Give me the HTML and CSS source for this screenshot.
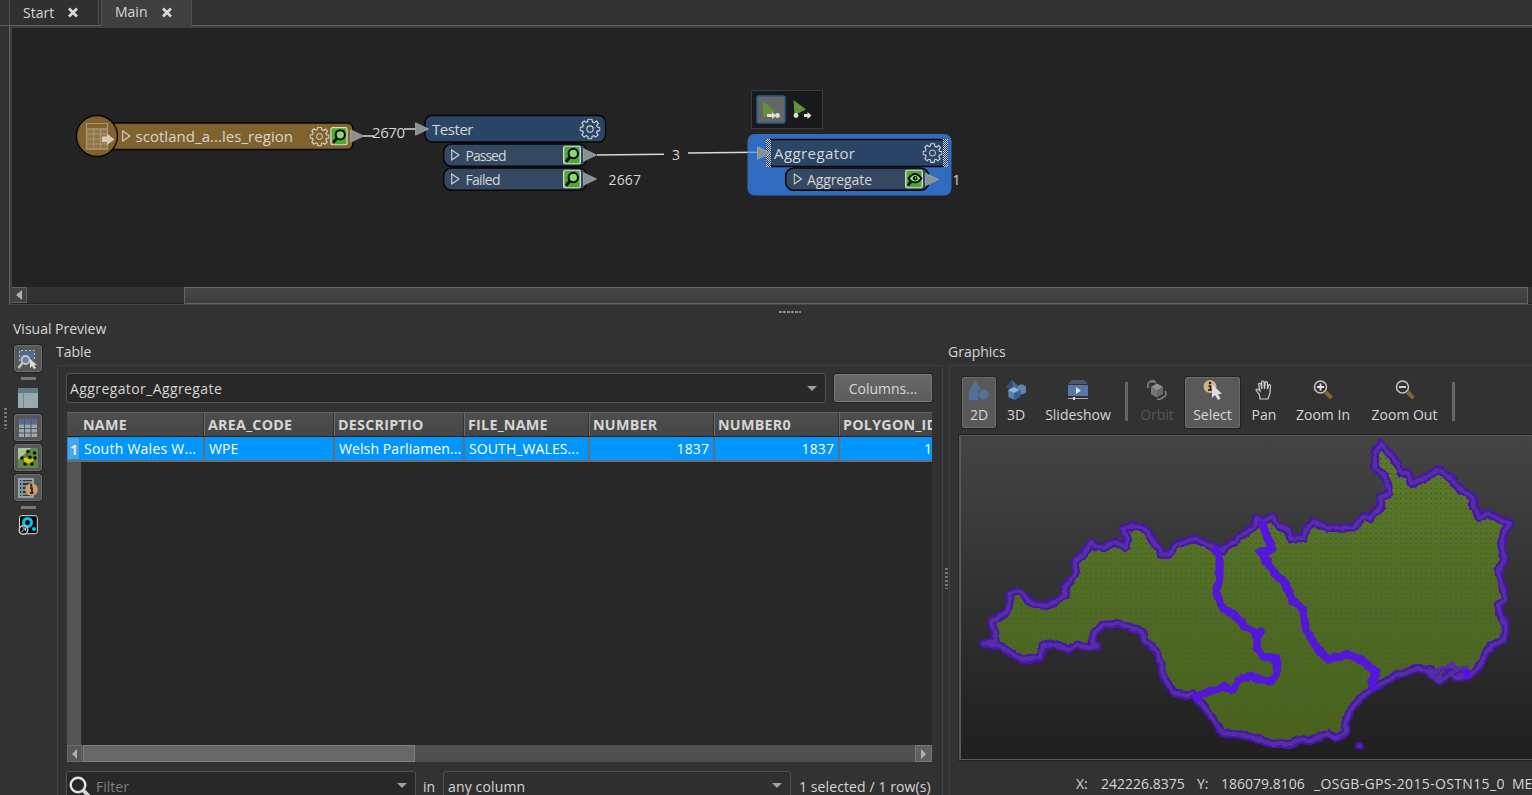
FILE: index.html
```html
<!DOCTYPE html>
<html lang="en">
<head>
<meta charset="utf-8">
<title>Workbench</title>
<link rel="stylesheet" href="styles.css">
</head>
<body>
<svg class="defs" width="0" height="0">
  <defs>
    <symbol id="gear" viewBox="-10 -10 20 20"><path d="M-1.8-9.3H1.8L2.4-6.7 4-6 6.2-7.5 8-5.2 6.4-3.2 6.9-1.8 9.4-1.2V1.5L6.9 2 6.3 3.4 7.7 5.6 5.4 7.7 3.5 6.3 2 7 1.5 9.4H-1.6L-2.1 7-3.6 6.3-5.6 7.7-7.7 5.5-6.3 3.5-6.9 2-9.4 1.5V-1.5L-6.9-2-6.3-3.5-7.7-5.6-5.5-7.7-3.6-6.4-2.3-6.9Z" fill="none" stroke="#d5d5d5" stroke-width="1.1"/><circle r="3" fill="none" stroke="#d5d5d5"/></symbol>
    <symbol id="lens" viewBox="0 0 18 19"><rect x=".7" y=".7" width="16.6" height="17.6" rx="1.8" fill="#4bab2b" stroke="#d8dcd6" stroke-width="1.3"/><circle cx="10.3" cy="8" r="4.7" fill="#8cd673" stroke="#050805" stroke-width="2"/><path d="M7 11.5 3 16" stroke="#050805" stroke-width="2.8"/></symbol>
    <symbol id="eye" viewBox="0 0 18 19"><rect x=".7" y=".7" width="16.6" height="17.6" rx="1.8" fill="#4bab2b" stroke="#d8dcd6" stroke-width="1.3"/><path d="M3.5 9Q10 0 16.5 9 10 17 3.500 9Z" fill="#98df80" stroke="#050805" stroke-width="1.800"/><circle cx="10.2" cy="8.8" r="2.3" fill="#050805"/><circle cx="10.6" cy="8.300" r=".9" fill="#98df80"/><path d="M6 12 3 16" stroke="#050805" stroke-width="2.8"/></symbol>
    <symbol id="expand" viewBox="0 0 9 12"><path d="M.7 1V11L8 6Z" fill="none" stroke="#d5d5d5" stroke-width="1.1"/></symbol>
    <symbol id="port" viewBox="0 0 14 14"><path d="M.5.8V13.2L13.5 7Z" fill="#8b9193" stroke="#a5a9aa" stroke-width=".8"/></symbol>
    <pattern id="stipple" width="2" height="2" patternUnits="userSpaceOnUse"><path d="M0 0H1V1H0ZM1 1H2V2H1Z" fill="#c3c9d2"/></pattern>
  </defs>
</svg>
<div class="app">
  <div class="tabs">
    <div class="tab start"><span>Start</span><svg width="10" height="11" viewBox="0 0 10 11"><path d="M1 1.500 9 9.500M9 1.500 1 9.500"/></svg></div>
    <div class="tab main"><span>Main</span><svg width="10" height="11" viewBox="0 0 10 11"><path d="M1 1.500 9 9.500M9 1.500 1 9.500"/></svg></div>
  </div>
  <div class="workspace">
    <svg class="canvas" width="1520" height="259" viewBox="12 28 1520 259">
      <!-- reader -->
      <path d="M110 123H347Q353 123 353 130V142Q353 149.500 347 149.500H110Z" fill="#80622d" stroke="#050505" stroke-width="1.300"/>
      <circle cx="97" cy="136" r="20.500" fill="#80622d" stroke="#050505" stroke-width="1.300"/>
      <g fill="none" stroke="#a99573" stroke-width="1.200"><path fill="#927649" d="M86.500 129H107.500V149H86.500Z"/><path d="M86.500 123.500H107.500V149H86.500ZM86.500 129H107.500M86.500 134H107.500M86.500 139H107.500M86.500 144H107.500M93.500 129V149M100.500 129V149"/></g>
      <path d="M102 136.500H107V133.500L114.500 139.500 107 145V142H102Z" fill="#d5c9b5"/>
      <use href="#expand" x="122" y="130" width="9" height="12"/>
      <text x="135.500" y="142" textLength="157.500">scotland_a...les_region</text>
      <use href="#gear" x="309.500" y="126.500" width="20" height="20"/>
      <use href="#lens" x="330" y="127" width="18" height="18.500"/>
      <path class="link" d="M360 136H374M404 129H416M597 155 664 154.300M688 153 757 152.300"/>
      <use href="#port" x="350" y="129" width="14" height="14"/>
      <text x="372" y="138" textLength="33">2670</text>
      <!-- tester -->
      <rect x="425" y="115.500" width="180.500" height="26.500" rx="7" fill="#2b4567" stroke="#050505" stroke-width="1.300"/>
      <rect class="sub" x="443.700" y="144" width="143" height="22.300" rx="8"/>
      <rect class="sub" x="443.700" y="168" width="143" height="22.300" rx="8"/>
      <use href="#port" x="415" y="122" width="14" height="14"/>
      <text x="432" y="135" textLength="41.500">Tester</text>
      <use href="#gear" x="579.500" y="118.500" width="21" height="21"/>
      <use href="#expand" x="451" y="149" width="9" height="12"/><use href="#expand" x="451" y="173" width="9" height="12"/>
      <text class="small" x="465.500" y="161" textLength="41">Passed</text><text class="small" x="465.500" y="185" textLength="35">Failed</text>
      <use href="#port" x="583" y="148" width="14" height="14"/><use href="#port" x="583" y="172" width="14" height="14"/>
      <use href="#lens" x="563" y="145.500" width="18" height="19"/><use href="#lens" x="563" y="169.500" width="18" height="19"/>
      <text class="small" x="672" y="160">3</text><text class="small" x="608.500" y="185" textLength="32.500">2667</text>
      <!-- run toolbar -->
      <rect x="751.500" y="90.500" width="71" height="38" fill="#191919" stroke="#3b3b3b"/>
      <rect x="757" y="96" width="28" height="27" rx="2" fill="#666" stroke="#21618f" stroke-width="1.500"/>
      <path d="M763 101 775 111.500 763 117.500ZM793.500 100 806 109.500 794.500 115Z" fill="#61923e"/>
      <g fill="#dedede"><path d="M767 114H772V112L776 115.500 772 119V117H767Z"/><circle cx="777.500" cy="115.500" r="2.400"/><circle cx="796" cy="115.500" r="2.400"/><path d="M804 114H807.500V112L811.500 115.500 807.500 119V117H804Z"/></g>
      <!-- aggregator -->
      <rect x="747.500" y="134" width="204" height="61.500" rx="7" fill="#306bbd"/>
      <path d="M748 152.300H759" stroke="#7ea9df" stroke-width="1.400"/>
      <rect x="767" y="139.500" width="180" height="27" rx="5" fill="#2b4567" stroke="#050505" stroke-width="1.300"/>
      <path d="M766 139H771V167H766ZM943 139H948V167H943Z" fill="url(#stipple)"/>
      <rect class="sub" x="785.700" y="168" width="143" height="22.300" rx="8"/>
      <use href="#port" x="757" y="146" width="14" height="14"/>
      <text x="774" y="159" textLength="81">Aggregator</text>
      <use href="#gear" x="922.500" y="142.500" width="20" height="21"/>
      <use href="#expand" x="793.500" y="173" width="9" height="12"/>
      <text class="small" x="807" y="185" textLength="65">Aggregate</text>
      <use href="#port" x="925" y="172.500" width="14" height="14"/>
      <use href="#eye" x="905" y="169.500" width="18" height="19"/>
      <text class="small" x="952.500" y="185">1</text>
    </svg>
    <div class="hscroll"><i class="arrow"><svg width="6" height="10"><path d="M6 0V10L0 5Z"/></svg></i><i class="thumb"></i></div>
  </div>
  <div class="splitter"><i></i></div>
  <div class="title"><span>Visual Preview</span></div>
  <div class="preview">
    <div class="side">
      <i class="grip"></i>
      <div class="tools">
        <div class="tool on"><svg width="22" height="22" viewBox="0 0 22 22"><path d="M2.500 2.500H17.500V13H2.500Z" fill="#4e6b98"/><path d="M2.500 13V2.500H17.500V13" fill="none" stroke="#bbb" stroke-dasharray="2 2"/><circle cx="8.500" cy="12" r="4" fill="#728196" stroke="#c5c5c5" stroke-width="1.800"/><path d="M5.500 15 1.500 20" stroke="#c5c5c5" stroke-width="2.500"/><path d="M13 11V20L15 18 17 21 19 20 17.300 17H20Z" fill="#ddd"/></svg></div>
        <i class="bar"></i>
        <div class="tool"><svg width="20" height="20"><path d="M0 0H20V20H0Z" fill="#9aa8b0"/><path d="M0 0H20V5H0Z" fill="#5e7b8b"/><path d="M5.500 5V20" stroke="#71858f"/></svg></div>
        <div class="tool on"><svg width="18" height="18"><path d="M0 0H18V18H0Z" fill="#9aa8b0"/><path d="M0 0H18V4.500H0Z" fill="#526e9e"/><path d="M0 5H18M0 9.500H18M0 14H18M5.500 0V18M12 0V18" stroke="#555"/></svg></div>
        <div class="tool on"><svg width="20" height="20"><path d="M0 0H20V20H0Z" fill="#5b8b45"/><path d="M0 0H13L0 12Z" fill="#afc39b"/><path d="M9 6 10 10 13 11 17 8 16 13 12 16H7L5 12 4 10 8 9Z" fill="#d3c900" stroke="#4f5e13"/><g fill="#0a0a0a"><circle cx="10" cy="3.500" r="1.800"/><circle cx="4" cy="10" r="1.800"/><circle cx="12" cy="9" r="1.600"/><circle cx="16.500" cy="5" r="1.800"/><circle cx="17" cy="10" r="1.800"/><circle cx="7" cy="16" r="1.800"/><circle cx="14" cy="16" r="1.800"/></g></svg></div>
        <div class="tool on"><svg width="20" height="20"><path d="M1 1H15V19H1Z" fill="#34383b" stroke="#91a2ad" stroke-width="2"/><path d="M2 4H14M2 8H13M2 12H12M2 16H12M4 1V19" stroke="#91a2ad" stroke-width="1.400"/><circle cx="13.500" cy="11.500" r="6.300" fill="#cda16c"/><path d="M12 10H14V15H15.500M12 15H14" fill="none" stroke="#1b140d" stroke-width="1.600"/><circle cx="13.200" cy="7.500" r="1.200" fill="#1b140d"/></svg></div>
        <i class="bar"></i>
        <div class="tool last"><svg width="20" height="21"><rect x="1.500" y=".7" width="17.800" height="18" rx="2" fill="#050707" stroke="#ddd"/><circle cx="9.500" cy="7.500" r="4" fill="none" stroke="#00c9ef" stroke-width="3"/><circle cx="16" cy="14" r="2" fill="#00c9ef"/><circle cx="5.500" cy="15" r="4.300" fill="#111" stroke="#ccc" stroke-width="1.400"/><path d="M3.500 17 7 13.500M4.500 13H7.500V16" fill="none" stroke="#ddd"/></svg></div>
      </div>
    </div>
    <div class="tablepane">
      <div class="label"><span>Table</span></div>
      <div class="frame">
        <div class="row1"><div class="combo"><span class="wide">Aggregator_Aggregate</span><i class="down"></i></div><div class="button"><span>Columns...</span></div></div>
        <div class="table">
          <div class="tr head"><b class="num"></b><b>NAME</b><b>AREA_CODE</b><b>DESCRIPTIO</b><b>FILE_NAME</b><b>NUMBER</b><b>NUMBER0</b><b>POLYGON_ID</b></div>
          <div class="tr data"><b class="num">1</b><span>South Wales W...</span><span>WPE</span><span>Welsh Parliamen...</span><span>SOUTH_WALES...</span><span class="r">1837</span><span class="r">1837</span><span class="r">1</span></div>
          <div class="empty"></div>
          <div class="tscroll"><i class="arrow"><svg width="5" height="10"><path d="M5 0V10L0 5Z"/></svg></i><i class="thumb"></i><i class="arrow right"><svg width="5" height="10"><path d="M0 0V10L5 5Z"/></svg></i></div>
        </div>
        <div class="filter">
          <div class="combo f1"><svg width="24" height="24"><circle cx="10" cy="10" r="7.300" fill="none" stroke="#e2e2e2" stroke-width="2.400"/><path d="M15 15 22.500 23" stroke="#d5d5d5" stroke-width="4"/></svg><span>Filter</span><i class="down"></i></div>
          <span class="in">in</span>
          <div class="combo f2"><span>any column</span><i class="down"></i></div>
          <span class="count">1 selected / 1 row(s)</span>
        </div>
      </div>
    </div>
    <div class="vsplit"><i class="grip"></i></div>
    <div class="graphics">
      <div class="label"><span>Graphics</span></div>
      <div class="gframe">
        <div class="toolbar">
          <div class="tb on w34"><svg width="20" height="20"><path d="M6.500 0 12 10H1ZM0 10.500H9V20H0Z" fill="#536f9e"/><circle cx="14.800" cy="14.500" r="5" fill="#536f9e"/></svg><span>2D</span></div>
          <div class="tb w40"><svg width="20" height="20"><path d="M6 0 12 6 8 10 0 7Z" fill="#456a9f"/><path d="M6 0 7 8 0 7Z" fill="#2d4e7d"/><circle cx="15.500" cy="9.500" r="5" fill="#6183b5"/><path d="M7.500 7.500 14 10V17L8 20 2 17V10Z" fill="#5b80b5" stroke="#233b5d" stroke-width=".6"/><path d="M2 10 8 13 14 10 8 7Z" fill="#93afd4"/><path d="M8 13V20L14 17V10Z" fill="#3b6096"/></svg><span>3D</span></div>
          <div class="tb w84"><svg width="22" height="20"><path d="M4 1H18M2 3H20" stroke="#506984" stroke-width="1.300"/><path d="M1 5H21V16H1Z" fill="#5877a9"/><path d="M9 7V14L14 10.500Z" fill="#e4e4e4"/><path d="M1 18.500H21" stroke="#aaa"/><path d="M6 17H8V20H6Z" fill="#ddd"/></svg><span>Slideshow</span></div>
          <i class="sep s1"></i>
          <div class="tb dis w50"><svg width="20" height="20"><path d="M10 3.500 16 7V14L10 17.500 4 14V7Z" fill="#686868"/><path d="M4 7 10 10 16 7 10 3.500Z" fill="#929292"/><path d="M10 10V17.500L4 14V7Z" fill="#777"/><path d="M8 1Q2 0 .8 5V8M4 2Q8 1 9 3M18 11Q21 16 15 18M10 19.500Q14 20 16 17" fill="none" stroke="#858585" stroke-width="1.500"/></svg><span>Orbit</span></div>
          <div class="tb on w55"><svg width="22" height="21"><circle cx="8" cy="6.500" r="6.500" fill="#d5b083"/><path d="M6.500 6H8.500V10M6 10H10" fill="none" stroke="#17120d" stroke-width="1.600"/><circle cx="8" cy="3" r="1.200" fill="#17120d"/><path d="M10 4V18L13 15 16 20 18.500 18.500 16 14H20Z" fill="#dedede"/></svg><span>Select</span></div>
          <div class="tb w48"><svg width="18" height="20"><path d="M5 19 4.500 15 1 10Q2 8 4 10L5 11 3.500 4Q4.500 2.500 5.800 4L7 9 6.500 2Q8 0 9 2L9.500 9 10.300 2Q12 1 12.500 3V9L13.500 5Q15 4 15.500 6L15 13 13 19Z" fill="none" stroke="#cecece" stroke-width="1.200"/></svg><span>Pan</span></div>
          <div class="tb w70"><svg width="20" height="20"><circle cx="7.500" cy="7" r="6" fill="none" stroke="#c8c8c8" stroke-width="1.500"/><path d="M4 7H11M7.500 3.500V10.500" stroke="#e4e4e4" stroke-width="1.800"/><path d="M12.500 12 18.500 18" stroke="#85642a" stroke-width="4"/></svg><span>Zoom In</span></div>
          <div class="tb w93"><svg width="20" height="20"><circle cx="7.500" cy="7" r="6" fill="none" stroke="#c8c8c8" stroke-width="1.500"/><path d="M4 7H11" stroke="#e4e4e4" stroke-width="1.800"/><path d="M12.500 12 18.500 18" stroke="#85642a" stroke-width="4"/></svg><span>Zoom Out</span></div>
          <i class="sep"></i>
        </div>
        <div class="mapview">
          <svg width="570" height="322" viewBox="962 436 570 322">
            <defs>
              <linearGradient id="land" x1="0" y1="0" x2="0" y2="1"><stop stop-color="#5b7c28"/><stop offset=".6" stop-color="#4d6a20"/><stop offset="1" stop-color="#486219"/></linearGradient>
              <pattern id="dots" width="15" height="15" patternUnits="userSpaceOnUse"><path d="M3 10.500H9" stroke="#4c5350" stroke-width="3"/></pattern>
              <filter id="rough" x="-5%" y="-5%" width="110%" height="110%"><feTurbulence type="fractalNoise" baseFrequency=".13" numOctaves="2" seed="4"/><feDisplacementMap in="SourceGraphic" scale="4" xChannelSelector="R" yChannelSelector="G"/></filter>
              <path id="coast" d="M70 640 108 630 105 600 92 575 140 545 152 515 150 490 170 483 188 485 205 510 222 520 262 526 295 508 318 495 315 468 335 450 348 425 345 395 372 370 396 335 410 348 430 352 465 335 497 348 505 325 490 295 520 286 545 288 565 303 580 335 600 355 605 372 630 372 645 345 670 335 705 325 735 338 768 352 790 362 800 345 825 335 845 315 885 290 890 262 912 272 937 258 955 285 988 300 992 325 1030 322 1045 290 1062 273 1105 292 1185 290 1212 258 1230 262 1265 225 1262 200 1290 190 1285 160 1270 130 1248 115 1245 65 1265 40 1290 70 1315 100 1325 130 1345 125 1355 160 1390 145 1437 117 1470 140 1500 175 1542 202 1540 225 1562 262 1585 248 1615 265 1652 278 1635 300 1625 340 1635 388 1615 420 1627 460 1637 508 1615 525 1625 560 1640 585 1632 628 1595 645 1575 675 1555 715 1530 735 1495 742 1470 725 1440 752 1415 735 1412 718 1370 716 1320 730 1250 767 1200 805 1170 845 1158 875 1158 908 1130 922 1105 908 1050 932 1025 925 995 940 935 940 900 926 840 912 790 908 760 865 735 830 710 802 700 788 680 795 645 788 612 740 605 700 590 660 555 630 545 600 510 590 480 580 430 583 405 605 398 635 415 650 370 648 350 642 325 658 290 640 250 645 243 680 190 688 150 665 120 645Z"/>
            </defs>
            <g transform="translate(960 430) scale(.33333)">
              <use href="#coast" fill="url(#land)"/>
              <use href="#coast" fill="url(#dots)"/>
            </g>
            <g filter="url(#rough)"><g transform="translate(960.600 430.600) scale(.33333)" stroke-linejoin="round" stroke-linecap="round">
              <use href="#coast" fill="none" stroke="#4612ac" stroke-width="25"/>
              <use href="#coast" fill="none" stroke="#582fa5" stroke-width="12"/>
              <path d="M1420 728 1455 712 1480 700 1490 715 1520 712 1515 730 1490 725 1440 745 1425 738" fill="none" stroke="#572ea4" stroke-width="16"/>
              <path d="M1425 735 1460 714M1450 738 1480 716M1485 732 1510 722" stroke="#4915ae" stroke-width="4"/>
              <path d="M1522 727V729" stroke="#5510ef" stroke-width="22"/>
              <path d="M770 360 780 390 780 440 770 490 790 535 825 550 850 585 890 605 905 605 890 620 893 655 912 678 950 682 952 725 935 752 910 750 875 735 835 750 818 780 795 768 755 780 710 800M908 280 925 325 938 355 902 365 925 395 945 430 970 450 1000 510 1030 535 1040 600 1075 655 1105 687 1165 670 1215 695 1252 730 1235 750 1242 770" fill="none" stroke="#5413dc" stroke-width="24"/>
              <circle cx="1200" cy="946" r="10" fill="#5a35a0" stroke="#4713a9" stroke-width="9"/>
            </g></g>
          </svg>
        </div>
        <div class="status"><span class="x">X:</span><span class="xv">242226.8375</span><span class="y">Y:</span><span class="yv">186079.8106</span><span class="crs">_OSGB-GPS-2015-OSTN15_0</span><span>METER</span></div>
      </div>
    </div>
  </div>
</div>
</body>
</html>
```
FILE: styles.css
```css
* { box-sizing: border-box; }
body { margin: 0; background: #323232; }
.defs { position: absolute; }
.app { width: 1532px; height: 795px; overflow: hidden; display: flex; flex-direction: column; background: #323232; color: #d6d6d6; font: 14px/20px "Open Sans", "Noto Sans", sans-serif; }
.app span, .app b { white-space: nowrap; }
svg { display: block; flex: none; }
i { display: block; flex: none; }

.tabs { display: flex; height: 26px; flex: none; padding-left: 9px; border-bottom: 1px solid #5d5d5d; }
.tab { display: flex; align-items: center; justify-content: space-between; height: 25px; border: 1px solid #515151; border-width: 0 1px; }
.tab path { stroke: #dadada; stroke-width: 2.6; }
.start { width: 90px; padding: 0 20px 0 13px; background: #303030; margin-right: 2px; }
.main { width: 91px; height: 26px; padding: 0 19px 2px 13px; background: #404040; }

.workspace { height: 279px; flex: none; margin-left: 9px; border-left: 1px solid #626262; border-bottom: 1px solid #484848; padding: 2px 0 0 2px; background: #404040; display: flex; flex-direction: column; }
.canvas { background: #232323; }
.canvas text { font: 15px "Open Sans", "Noto Sans", sans-serif; fill: #d5d5d5; }
.canvas .small { font-size: 14px; }
.canvas .link { fill: none; stroke: #d8d8d8; stroke-width: 1.4; }
.canvas .sub { fill: #354861; stroke: #050505; stroke-width: 1.4; }
.hscroll { height: 17px; display: flex; background: #323232; border-bottom: 1px solid #222; }
.arrow { display: flex; align-items: center; justify-content: center; }
.hscroll .arrow { width: 15px; height: 16px; background: #424242; border: 1px solid #606060; border-left: 0; }
.arrow path { fill: #b0b0b0; }
.hscroll .thumb { margin-left: 157px; width: 1344px; height: 17px; border: 1px solid #646464; background: linear-gradient(#484848, #3c3c3c); }
.splitter { height: 13px; flex: none; padding: 6px 0 0 779px; }
.splitter i { width: 22px; height: 2px; background: repeating-linear-gradient(90deg, #8c8c8c 0 3px, transparent 3px 4px); }
.title { height: 23px; flex: none; padding: 1px 0 0 13px; }
.preview { display: flex; height: 454px; flex: none; }

.side { width: 57px; display: flex; }
.grip { width: 3px; height: 21px; background: repeating-linear-gradient(#777 0 2px, transparent 2px 4px); }
.side .grip { margin: 67px 6px 0 4px; }
.tools { width: 30px; padding-top: 4px; display: flex; flex-direction: column; align-items: center; }
.tool { width: 28px; height: 27px; margin-bottom: 3px; flex: none; display: flex; align-items: center; justify-content: center; }
.tool.on { background: #575757; border: 1px solid #6d6d6d; border-radius: 3px; box-shadow: 0 0 0 1px #222; }
.tools .bar { width: 15px; height: 3px; background: #777; margin: 2px 0 4px; }
.tools .bar:nth-of-type(2) { margin-bottom: 3px; }

.tablepane { width: 886px; display: flex; flex-direction: column; }
.label { height: 24px; flex: none; padding-top: 1px; }
.tablepane .label { margin-left: -1px; }
.frame { flex: 1; border: 1px solid #404040; border-bottom: 0; border-radius: 2px 2px 0 0; padding: 7px 10px 0 8px; }
.row1 { display: flex; gap: 8px; }
.combo { height: 30px; width: 760px; display: flex; align-items: center; justify-content: space-between; padding: 1px 8px 0 3px; background: #282828; border: 1px solid #505050; border-radius: 3px; }
.wide { letter-spacing: .4px; }
.down { width: 0; height: 0; border: 5px solid transparent; border-top-color: #a0a0a0; border-bottom: 0; }
.button { width: 98px; height: 28px; margin-top: 1px; padding-top: 1px; display: flex; align-items: center; justify-content: center; background: linear-gradient(#686868, #5b5b5b); border: 1px solid #787878; border-radius: 2px; box-shadow: 0 0 0 1px #242424; }
.table { margin: 9px 0 0 1px; width: 865px; height: 350px; overflow: hidden; display: flex; flex-direction: column; }
.tr { display: grid; grid-template-columns: 13px 124px 130px 130px 125px 125px 125px 93px; height: 25px; flex: none; }
.tr > * { border-left: 1px solid #6b6b6b; border-right: 1px solid #333; padding: 0 4px 0 3px; overflow: hidden; line-height: 24px; }
.head { background: linear-gradient(#4e4e4e, #454545); border-top: 1px solid #626262; border-bottom: 1px solid #222; }
.head b { font-size: 14.3px; letter-spacing: .25px; line-height: 23px; }
.head .num { border: 0; }
.head b:nth-child(2) { border-left: 0; }
.head b:last-child, .data .r:last-child { border-right: 0; }
.data { background: #0096fe; color: #fff; border-bottom: 2px solid #6b6b6b; height: 25px; }
.data > * { border-right-color: #6b6b6b; padding-left: 4px; letter-spacing: .1px; }
.data > span:nth-child(2) { border-left: 0; letter-spacing: .25px; }
.data > .num { padding: 0 0 0 2px; background: #42a5ee; border: 1px solid #3186c4; color: #dbe9f5; }
.data .r { text-align: right; }
.data .r:last-child { padding-right: 0; }
.empty { flex: 1; background: #282828; border-left: 14px solid #545454; }
.tscroll { height: 17px; display: flex; background: #505050; }
.tscroll .arrow { width: 15px; background: #575757; border: 1px solid #6a6a6a; }
.tscroll .thumb { width: 332px; margin-left: 1px; border: 1px solid #808080; background: #676767; }
.tscroll .right { width: 17px; margin-left: auto; background: #606060; border-color: #777; }
.filter { display: flex; align-items: flex-start; margin-top: 9px; }
.f1 { width: 350px; padding-left: 1px; justify-content: flex-start; }
.f1 span { color: #7d7d7d; margin-left: 4px; }
.f1 .down { margin-left: auto; }
.f1 .down, .f2 .down { margin-top: -2px; }
.in { width: 27px; padding: 6px 0 0 7px; }
.f2 { width: 348px; background: #303030; margin-right: 8px; padding-left: 4px; letter-spacing: .15px; }
.count { padding-top: 6px; letter-spacing: .1px; }

.vsplit { width: 6px; padding-top: 227px; }
.vsplit .grip { margin-left: 2px; }
.graphics { width: 583px; flex: none; display: flex; flex-direction: column; }
.graphics .label { margin-left: -1px; }
.gframe { flex: 1; border: 1px solid #404040; border-width: 1px 0 0 1px; }
.toolbar { display: flex; padding: 11px 0 0 12px; height: 69px; }
.tb { height: 51px; flex: none; display: flex; flex-direction: column; align-items: center; padding-top: 3px; }
.tb span { margin-top: 5px; }
.tb svg { height: 20px; }
.tb.on { background: #595959; border: 1px solid #6c6c6c; border-radius: 2px; box-shadow: 0 0 0 1px #232323; padding-top: 2px; }
.dis span { color: #555; }
.w34 { width: 34px; } .w40 { width: 40px; } .w84 { width: 84px; } .w50 { width: 50px; margin-right: 3px; }
.w55 { width: 55px; } .w48 { width: 48px; } .w70 { width: 70px; } .w93 { width: 93px; }
.sep { width: 3px; height: 39px; margin: 5px 0 0 1px; background: #666; }
.s1 { margin: 5px 4px 0 5px; }
.mapview { margin-left: 9px; width: 573px; height: 325px; border: 1px solid #5a5a5a; border-width: 1px 0 1px 2px; outline: 1px solid #222; background: linear-gradient(#444, #1f1f1f); }
.status { display: flex; padding: 14px 0 0 126px; }
.status span { flex: none; }
.x { width: 25px; } .xv { width: 96px; } .y { width: 24px; } .yv { width: 93px; } .crs { width: 198px; letter-spacing: .35px; }
```
